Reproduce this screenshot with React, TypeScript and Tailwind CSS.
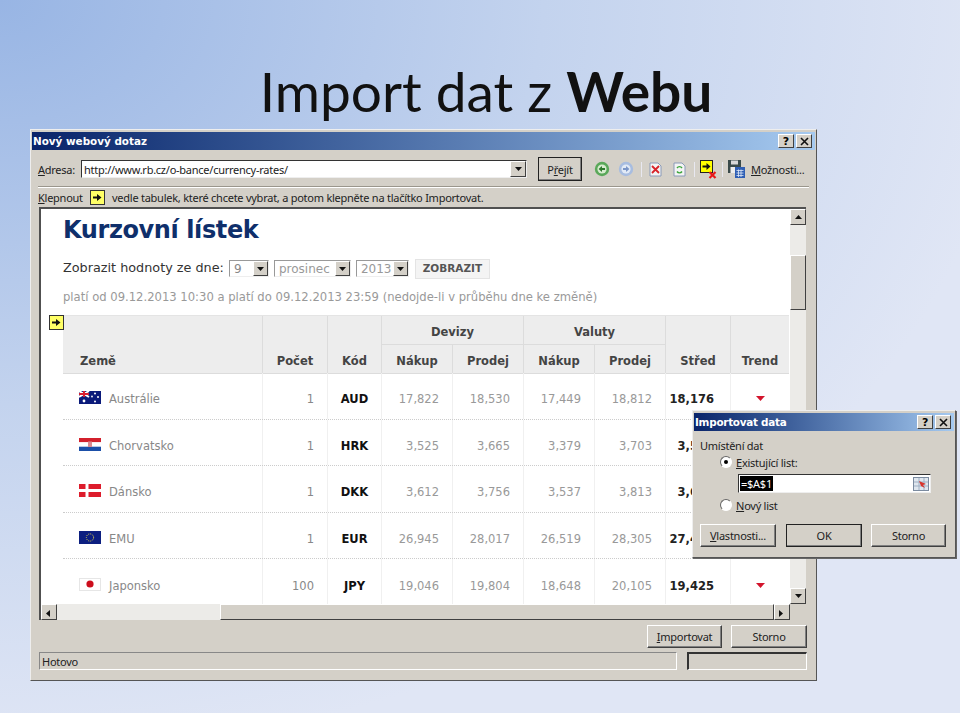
const ui = "font-['Noto_Sans',sans-serif] tracking-[-0.25px]"
const web = "font-['DejaVu_Sans',sans-serif]"

const RATES = [
    { name: "Austrálie", flag: "au", count: "1", code: "AUD", v: ["17,822", "18,530", "17,449", "18,812"], mid: "18,176" },
    { name: "Chorvatsko", flag: "hr", count: "1", code: "HRK", v: ["3,525", "3,665", "3,379", "3,703"], mid: "3,595" },
    { name: "Dánsko", flag: "dk", count: "1", code: "DKK", v: ["3,612", "3,756", "3,537", "3,813"], mid: "3,684" },
    { name: "EMU", flag: "eu", count: "1", code: "EUR", v: ["26,945", "28,017", "26,519", "28,305"], mid: "27,481" },
    { name: "Japonsko", flag: "jp", count: "100", code: "JPY", v: ["19,046", "19,804", "18,648", "20,105"], mid: "19,425" },
]

function Flag({ id }: { id: string }) {
    return (
        <svg width="22" height="13" viewBox="0 0 22 13" className="shrink-0">
            {id === "au" && (
                <>
                    <rect width="22" height="13" fill="#0a1a7a" />
                    <path d="M0 0l10 6M10 0L0 6" stroke="#fff" strokeWidth="2" />
                    <path d="M5 0v6M0 3h10" stroke="#d81e30" strokeWidth="2" />
                    <circle cx="5" cy="10" r="1.4" fill="#fff" />
                    <circle cx="16" cy="2.5" r="1" fill="#fff" />
                    <circle cx="19" cy="6" r="1" fill="#fff" />
                    <circle cx="16" cy="10.5" r="1" fill="#fff" />
                    <circle cx="13" cy="5.5" r="0.9" fill="#fff" />
                </>
            )}
            {id === "hr" && (
                <>
                    <rect width="22" height="4.3" fill="#d3202c" />
                    <rect y="4.3" width="22" height="4.4" fill="#fff" />
                    <rect y="8.7" width="22" height="4.3" fill="#1b4fa8" />
                    <rect x="9" y="3.5" width="4" height="5.5" fill="#d98a90" />
                </>
            )}
            {id === "dk" && (
                <>
                    <rect width="22" height="13" fill="#dd1c2c" />
                    <rect x="6.5" width="3" height="13" fill="#fff" />
                    <rect y="5" width="22" height="3" fill="#fff" />
                </>
            )}
            {id === "eu" && (
                <>
                    <rect width="22" height="13" fill="#0c1f80" />
                    <circle cx="11" cy="6.5" r="3.6" fill="none" stroke="#e8d84a" strokeWidth="1" strokeDasharray="1 1.1" />
                </>
            )}
            {id === "jp" && (
                <>
                    <rect x="0.5" y="0.5" width="21" height="12" fill="#fff" stroke="#e6e6e6" />
                    <circle cx="11" cy="6" r="3.6" fill="#cc0d1c" />
                </>
            )}
        </svg>
    )
}

function YellowArrow({ className = "" }: { className?: string }) {
    return (
        <svg width="15" height="15" viewBox="0 0 15 15" className={className}>
            <rect x="0.5" y="0.5" width="14" height="14" fill="#ffff66" stroke="#333" />
            <path d="M3 6.5h4V4l4.5 3.5L7 11V8.5H3z" fill="#111" />
        </svg>
    )
}

function TitleBar({ title, from }: { title: string; from: string }) {
    return (
        <div className={`flex h-[18px] items-center justify-between bg-gradient-to-r from-[#0a246a] to-[#a6caf0] pl-[1px] pr-[3px] ${from}`}>
            <span className={`${web} text-[10.4px] font-bold leading-none text-white`}>{title}</span>
            <div className="flex">
                <CapBtn>?</CapBtn>
                <div className="w-[2px]" />
                <CapBtn>
                    <svg width="9" height="9" viewBox="0 0 9 9">
                        <path d="M1 1l7 7M8 1L1 8" stroke="#111" strokeWidth="1.6" />
                    </svg>
                </CapBtn>
            </div>
        </div>
    )
}

function CapBtn({ children }: { children: React.ReactNode }) {
    return (
        <div className={`${web} flex h-[14px] w-[16px] items-center justify-center border border-b-[#404040] border-l-white border-r-[#404040] border-t-white bg-[#d4d0c8] text-[11px] font-bold leading-none text-black`}>
            {children}
        </div>
    )
}

function Btn({ children, className = "" }: { children: React.ReactNode; className?: string }) {
    return (
        <div className={`${ui} flex items-center justify-center border border-b-[#404040] border-l-white border-r-[#404040] border-t-white bg-[#d4d0c8] text-[11px] leading-none text-[#222] shadow-[inset_-1px_-1px_0_#808080] ${className}`}>
            {children}
        </div>
    )
}

function DropBtn({ className = "" }: { className?: string }) {
    return (
        <div className={`flex items-center justify-center border border-b-[#404040] border-l-white border-r-[#404040] border-t-white bg-[#d4d0c8] ${className}`}>
            <svg width="7" height="4" viewBox="0 0 7 4">
                <path d="M0 0h7L3.5 4z" fill="#111" />
            </svg>
        </div>
    )
}

function ScrollBtn({ dir }: { dir: "up" | "down" | "left" | "right" }) {
    const d = { up: "M0 4h7L3.5 0z", down: "M0 0h7L3.5 4z", left: "M4 0v7L0 3.5z", right: "M0 0v7l4-3.5z" }[dir]
    return (
        <div className="flex h-[16px] w-[16px] shrink-0 items-center justify-center border border-b-[#404040] border-l-white border-r-[#404040] border-t-white bg-[#d4d0c8]">
            <svg width="7" height="7" viewBox="0 0 7 7" className="overflow-visible">
                <path d={d} fill="#111" transform="translate(0 1)" />
            </svg>
        </div>
    )
}

function Select({ value, w, text }: { value: string; w: string; text: string }) {
    return (
        <div className={`flex h-[17px] items-center justify-between border border-b-[#eee] border-l-[#999] border-r-[#eee] border-t-[#999] bg-white pl-[4px] ${w}`}>
            <span className={`${web} text-[12px] leading-none ${text}`}>{value}</span>
            <DropBtn className="h-[15px] w-[15px]" />
        </div>
    )
}

function ToolIcons() {
    return (
        <div className="ml-[12px] flex items-center">
            <svg width="16" height="16" viewBox="0 0 16 16">
                <circle cx="8" cy="8" r="7.2" fill="#5aa85a" />
                <circle cx="8" cy="8" r="4.6" fill="#d8ecd0" />
                <path d="M11 7H8V5L4.6 8 8 11V9h3z" fill="#2c7a2c" />
            </svg>
            <svg width="16" height="16" viewBox="0 0 16 16" className="ml-[8px]">
                <circle cx="8" cy="8" r="7.2" fill="#a8bde0" />
                <circle cx="8" cy="8" r="4.6" fill="#e2eaf6" />
                <path d="M5 7h3V5l3.4 3L8 11V9H5z" fill="#7b96c8" />
            </svg>
            <div className="ml-[7px] h-[15px] w-[1px] bg-[#e8e8f0]" />
            <svg width="13" height="15" viewBox="0 0 13 15" className="ml-[7px]">
                <path d="M1 1h8l3 3v10H1z" fill="#f4f4f4" stroke="#8a9ab8" />
                <path d="M3 4l7 7M10 4l-7 7" stroke="#d8232a" strokeWidth="1.8" />
            </svg>
            <svg width="13" height="15" viewBox="0 0 13 15" className="ml-[11px]">
                <path d="M1 1h8l3 3v10H1z" fill="#f4f4f4" stroke="#8a9ab8" />
                <path d="M4 6a3 3 0 0 1 5 0M9 9.500a3 3 0 0 1-5 0" fill="none" stroke="#3aa53a" strokeWidth="1.4" />
            </svg>
            <div className="ml-[8px] h-[15px] w-[1px] bg-[#e8e8f0]" />
            <svg width="18" height="19" viewBox="0 0 18 19" className="ml-[5px]">
                <rect x="0.5" y="0.5" width="12" height="12" fill="#ffff00" stroke="#222" />
                <path d="M2.500 5.500h4V3l4 3.500-4 3.500V7.500h-4z" fill="#111" />
                <path d="M9.500 12l6 6M15.500 12l-6 6" stroke="#e81818" strokeWidth="2.200" />
            </svg>
            <div className="ml-[4px] h-[15px] w-[1px] bg-[#e8e8f0]" />
            <svg width="17" height="18" viewBox="0 0 17 18" className="ml-[5px]">
                <path d="M0 0h13v13H0z" fill="#3a4a4a" />
                <rect x="3" y="0.500" width="7" height="4" fill="#d8d8d8" />
                <rect x="2.500" y="7" width="8" height="6" fill="#eee" />
                <rect x="7" y="7" width="10" height="11" fill="#2f5fb4" />
                <path d="M8.500 10.500h7M8.500 13h7M8.500 15.500h7M10.500 9.500v7.500M13 9.500v7.500" stroke="#dfe8f8" strokeWidth="0.800" />
            </svg>
            <span className={`${ui} ml-[6px] text-[11px] leading-none text-[#222]`}>
                <u>M</u>ožnosti...
            </span>
        </div>
    )
}

function RatesTable() {
    const head = `${web} text-[11.5px] font-bold leading-none text-[#444]`
    const cell = "flex items-center border-l border-[#f0f0f0] pt-[8px]"
    const hc = "flex items-end justify-center bg-[#ededed] pb-[6px] border-l border-b border-[#dcdcdc]"
    const group = "col-span-2 flex items-center justify-center border-b border-l border-[#dcdcdc] bg-[#ededed] pt-[6px]"
    return (
        <div className="ml-[22px] w-[726px]">
            <div className="grid h-[58px] grid-cols-[199px_65px_54px_71px_71px_71px_71px_65px_59px] grid-rows-[29px_29px] border-t border-[#e4e4e4]">
                <div className={`${hc} row-span-2 !justify-start pl-[17px] !border-l-0`}><span className={head}>Země</span></div>
                <div className={`${hc} row-span-2`}><span className={head}>Počet</span></div>
                <div className={`${hc} row-span-2`}><span className={head}>Kód</span></div>
                <div className={group}><span className={head}>Devizy</span></div>
                <div className={group}><span className={head}>Valuty</span></div>
                <div className={`${hc} row-span-2`}><span className={head}>Střed</span></div>
                <div className={`${hc} row-span-2`}><span className={head}>Trend</span></div>
                <div className={hc}><span className={head}>Nákup</span></div>
                <div className={hc}><span className={head}>Prodej</span></div>
                <div className={hc}><span className={head}>Nákup</span></div>
                <div className={hc}><span className={head}>Prodej</span></div>
            </div>
            {RATES.map((r, i) => (
                <div
                    key={r.code}
                    className={`grid h-[46.5px] grid-cols-[199px_65px_54px_71px_71px_71px_71px_65px_59px] ${web} text-[11.5px] leading-none ${i < 4 ? "border-b border-dotted border-[#ccc]" : ""}`}
                >
                    <div className="flex items-center pl-[16px] pt-[8px]">
                        <div className="-mt-[4px]"><Flag id={r.flag} /></div>
                        <span className="ml-[8px] text-[#888]">{r.name}</span>
                    </div>
                    <div className={`${cell} justify-end pr-[13px] text-[#888]`}>{r.count}</div>
                    <div className={`${cell} justify-center font-bold text-[#111]`}>{r.code}</div>
                    {r.v.map((x, j) => (
                        <div key={j} className={`${cell} justify-end pr-[13px] text-[#999]`}>{x}</div>
                    ))}
                    <div className={`${cell} justify-end pr-[16px] font-bold text-[#222]`}>{r.mid}</div>
                    <div className={`${cell} justify-center`}>
                        <svg width="9" height="5" viewBox="0 0 9 5" className="-mt-[2px]">
                            <path d="M0 0h9L4.500 5z" fill="#d3142c" />
                        </svg>
                    </div>
                </div>
            ))}
        </div>
    )
}

function WebFrame() {
    return (
        <div className="ml-[8px] flex h-[413px] w-[767px] flex-col border-l-2 border-t-2 border-[#505050]">
            <div className="flex min-h-0 flex-1">
                <div className="relative min-w-0 flex-1 overflow-hidden bg-white">
                    <YellowArrow className="absolute left-[8px] top-[106px]" />
                    <div className={`${web} pl-[22px] pt-[7px]`}>
                        <h1 className="text-[24px] font-bold leading-[28px] tracking-[-0.4px] text-[#0f2f6b]">Kurzovní lístek</h1>
                        <div className="mt-[16px] flex h-[17px] items-center">
                            <span className="text-[12.8px] leading-none text-[#333]">Zobrazit hodnoty ze dne:</span>
                            <div className="ml-[5px] flex gap-[5px]">
                                <Select value="9" w="w-[40px]" text="text-[#888]" />
                                <Select value="prosinec" w="w-[77px]" text="text-[#999]" />
                                <Select value="2013" w="w-[53px]" text="text-[#999]" />
                            </div>
                            <div className="ml-[6px] flex h-[20px] w-[75px] items-center justify-center border border-[#e4e4e4] bg-[#f4f4f4] text-[10.5px] font-bold leading-none text-[#555]">ZOBRAZIT</div>
                        </div>
                        <p className="mt-[12px] text-[11.6px] leading-[16px] text-[#999]">platí od 09.12.2013 10:30 a platí do 09.12.2013 23:59 (nedojde-li v průběhu dne ke změně)</p>
                    </div>
                    <div className="mt-[10px]">
                        <RatesTable />
                    </div>
                </div>
                <div className="flex w-[16px] shrink-0 flex-col bg-[#ecebe8]">
                    <ScrollBtn dir="up" />
                    <div className="h-[30px]" />
                    <div className="h-[55px] border border-b-[#404040] border-l-white border-r-[#404040] border-t-white bg-[#d4d0c8]" />
                    <div className="flex-1" />
                    <ScrollBtn dir="down" />
                </div>
            </div>
            <div className="flex h-[16px] shrink-0">
                <ScrollBtn dir="left" />
                <div className="w-[163px] bg-[#ecebe8]" />
                <div className="flex-1 border border-b-[#404040] border-l-white border-r-[#404040] border-t-white bg-[#d4d0c8]" />
                <ScrollBtn dir="right" />
                <div className="w-[16px] bg-[#d4d0c8]" />
            </div>
        </div>
    )
}

function ImportDialog() {
    return (
        <div className={`${ui} absolute left-[692px] top-[410px] h-[148px] w-[264px] border border-b-[#555] border-l-[#eee] border-r-[#555] border-t-[#eee] bg-[#d4d0c8] pt-[2px] text-[11px] leading-none text-[#222] shadow-[1px_1px_0_#666]`}>
            <TitleBar title="Importovat data" from="mx-[1px]" />
            <div className="pl-[7px] pt-[9px]">
                <div>Umístění dat</div>
                <div className="ml-[20px] mt-[5px] flex items-center gap-[4px]">
                    <span className="flex h-[12px] w-[12px] items-center justify-center rounded-full border border-b-white border-l-[#666] border-r-white border-t-[#666] bg-white">
                        <span className="h-[4px] w-[4px] rounded-full bg-black" />
                    </span>
                    <span><u>E</u>xistující list:</span>
                </div>
                <div className="ml-[38px] mt-[6px] flex h-[19px] w-[193px] items-center justify-between border border-b-[#eee] border-l-[#333] border-r-[#eee] border-t-[#333] bg-white pl-[1px] pr-[1px]">
                    <span className="bg-black px-[1px] py-[2px] text-white">=$A$1</span>
                    <svg width="16" height="14" viewBox="0 0 16 14">
                        <rect x="0.500" y="0.500" width="15" height="13" fill="#dfe6ee" stroke="#7b8ba0" />
                        <path d="M1 5h14M1 9h14M6 1v12M11 1v12" stroke="#9fb0c4" />
                        <path d="M6 4l7 3-3 1 2 3-4-2z" fill="#d8342c" />
                    </svg>
                </div>
                <div className="ml-[20px] mt-[6px] flex items-center gap-[4px]">
                    <span className="h-[12px] w-[12px] rounded-full border border-b-white border-l-[#666] border-r-white border-t-[#666] bg-white" />
                    <span><u>N</u>ový list</span>
                </div>
            </div>
            <div className="mt-[13px] flex pl-[7px]">
                <Btn className="h-[23px] w-[76px]"><span><u>V</u>lastnosti...</span></Btn>
                <Btn className="ml-[10px] h-[23px] w-[76px] !border-[#222]">OK</Btn>
                <Btn className="ml-[9px] h-[23px] w-[75px]">Storno</Btn>
            </div>
        </div>
    )
}

export default function App() {
    return (
        <div className="relative h-[713px] w-[960px] overflow-hidden bg-[radial-gradient(ellipse_at_top_left,#98b5e4_0%,#c3d3ee_40%,#e0e6f5_75%)]">
            <div className="flex h-[129px] items-start justify-center pl-[12px] pt-[58px]">
                <h1 className="font-['Lato',sans-serif] text-[55px] font-normal leading-[66px] text-[#111]">
                    Import dat z <b>Webu</b>
                </h1>
            </div>

            <div className="ml-[30px] h-[552px] w-[787px] border border-b-[#555] border-l-[#eee] border-r-[#555] border-t-[#eee] bg-[#d4d0c8] pt-[2px]">
                <TitleBar title="Nový webový dotaz" from="mx-[1px]" />

                <div className={`${ui} flex h-[36px] items-center pl-[7px] pt-[2px] text-[11px] leading-none text-[#222]`}>
                    <span className="w-[43px]"><u>A</u>dresa:</span>
                    <div className="flex h-[18px] w-[446px] items-center justify-between border border-b-[#eee] border-l-[#333] border-r-[#eee] border-t-[#333] bg-white pl-[2px]">
                        <span>http://www.rb.cz/o-bance/currency-rates/</span>
                        <DropBtn className="h-[16px] w-[16px]" />
                    </div>
                    <Btn className="ml-[11px] h-[24px] w-[44px] !border-[#222]"><span>P<u>ř</u>ejít</span></Btn>
                    <ToolIcons />
                </div>

                <div className="mx-[7px] h-[2px] border-b border-t border-b-white border-t-[#9a968c]" />

                <div className={`${ui} flex h-[19px] items-center pl-[7px] text-[11px] leading-none text-[#222]`}>
                    <span className="w-[52px]"><u>K</u>lepnout</span>
                    <YellowArrow />
                    <span className="ml-[7px]">vedle tabulek, které chcete vybrat, a potom klepněte na tlačítko Importovat.</span>
                </div>

                <WebFrame />

                <div className="flex h-[32px] items-center justify-end gap-[9px] pr-[9px] pt-[1px]">
                    <Btn className="h-[23px] w-[75px]"><span><u>I</u>mportovat</span></Btn>
                    <Btn className="h-[23px] w-[76px]">Storno</Btn>
                </div>

                <div className={`${ui} flex h-[18px] pl-[8px] pr-[9px] text-[11px] leading-none text-[#222]`}>
                    <div className="flex w-[638px] items-center border border-b-white border-l-[#888] border-r-white border-t-[#888] pl-[2px]">Hotovo</div>
                    <div className="ml-[10px] flex-1 border-b border-l-2 border-r border-t-2 border-b-white border-l-[#333] border-r-white border-t-[#333]" />
                </div>
            </div>

            <ImportDialog />
        </div>
    )
}
